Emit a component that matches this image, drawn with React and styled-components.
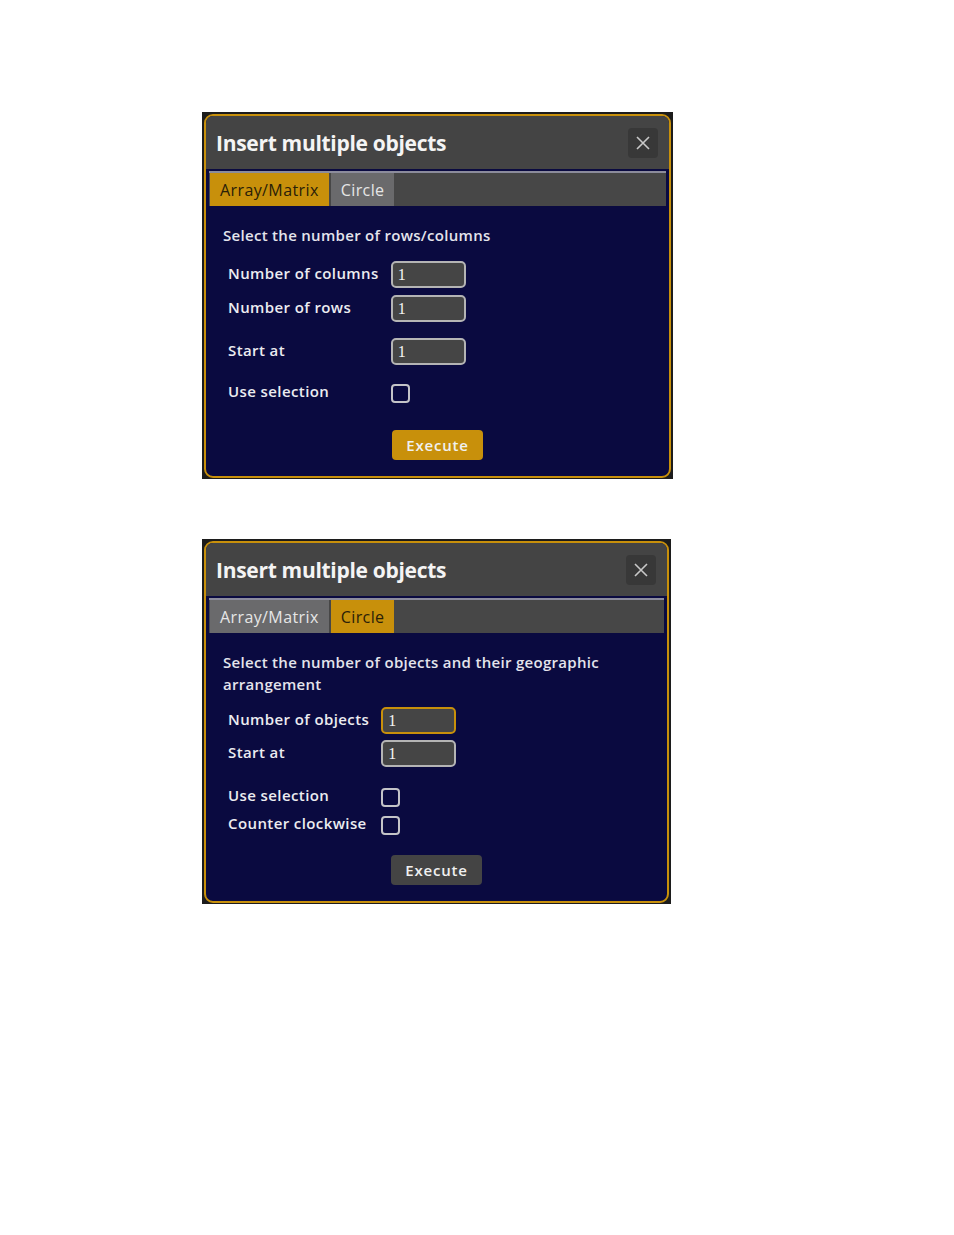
import React from "react";
import styled, { createGlobalStyle } from "styled-components";

const Global = createGlobalStyle`
  html, body {
    margin: 0;
    background: #ffffff;
  }
  body {
    font-family: "Open Sans", "Noto Sans", sans-serif;
  }
`;

const gold = "#c8900b";
const navy = "#0a0a40";

export default function App() {
  return (
    <Page>
      <Global />
      <Frame $width={471}>
        <Dialog>
          <TitleBar>
            <Title>Insert multiple objects</Title>
            <CloseButton aria-label="close">
              <svg width="16" height="16" viewBox="0 0 16 16">
                <path d="M2 2 L14 14 M14 2 L2 14" stroke="#c8c8c8" strokeWidth="1.6" />
              </svg>
            </CloseButton>
          </TitleBar>
          <Tabs>
            <Tab $active>Array/Matrix</Tab>
            <Tab>Circle</Tab>
          </Tabs>
          <Body>
            <Description>Select the number of rows/columns</Description>
            <Form $top={15}>
              <Label>Number of columns</Label>
              <Input>1</Input>
              <Label $mt={7}>Number of rows</Label>
              <Input $mt={7}>1</Input>
              <Label $mt={16}>Start at</Label>
              <Input $mt={16}>1</Input>
              <Label $mt={15}>Use selection</Label>
              <CheckCell $mt={15}>
                <Checkbox />
              </CheckCell>
            </Form>
            <Actions $top={24}>
              <ExecuteButton $primary>Execute</ExecuteButton>
            </Actions>
          </Body>
        </Dialog>
      </Frame>

      <Frame $width={469}>
        <Dialog>
          <TitleBar>
            <Title>Insert multiple objects</Title>
            <CloseButton aria-label="close">
              <svg width="16" height="16" viewBox="0 0 16 16">
                <path d="M2 2 L14 14 M14 2 L2 14" stroke="#c8c8c8" strokeWidth="1.6" />
              </svg>
            </CloseButton>
          </TitleBar>
          <Tabs>
            <Tab>Array/Matrix</Tab>
            <Tab $active>Circle</Tab>
          </Tabs>
          <Body>
            <Description>
              Select the number of objects and their geographic
              <br />
              arrangement
            </Description>
            <Form $top={12}>
              <Label>Number of objects</Label>
              <Input $focused>1</Input>
              <Label $mt={6}>Start at</Label>
              <Input $mt={6}>1</Input>
              <Label $mt={17}>Use selection</Label>
              <CheckCell $mt={17}>
                <Checkbox />
              </CheckCell>
              <Label $mt={2}>Counter clockwise</Label>
              <CheckCell $mt={2}>
                <Checkbox />
              </CheckCell>
            </Form>
            <Actions $top={17}>
              <ExecuteButton>Execute</ExecuteButton>
            </Actions>
          </Body>
        </Dialog>
      </Frame>
    </Page>
  );
}

const Page = styled.div`
  display: flex;
  flex-direction: column;
  align-items: flex-start;
  gap: 60px;
  padding: 112px 0 0 202px;
  min-height: 1235px;
  box-sizing: border-box;
`;

const Frame = styled.div`
  width: ${(p) => p.$width}px;
  box-sizing: border-box;
  background: #1c1c1c;
  padding: 2px 2px 1px 2px;
`;

const Dialog = styled.div`
  border: 2px solid ${gold};
  border-radius: 9px;
  background: ${navy};
  overflow: hidden;
`;

const TitleBar = styled.div`
  display: flex;
  align-items: center;
  justify-content: space-between;
  height: 53px;
  padding: 0 11px 0 10px;
  background: #444444;
  border-bottom: 2px solid ${navy};
`;

const Title = styled.h1`
  margin: 0;
  font-family: "Open Sans", "Noto Sans", sans-serif;
  font-weight: 700;
  font-size: 21px;
  letter-spacing: -0.3px;
  color: #f4f4f4;
`;

const CloseButton = styled.button`
  display: flex;
  align-items: center;
  justify-content: center;
  width: 30px;
  height: 30px;
  padding: 0;
  border: none;
  border-radius: 4px;
  background: #383838;
`;

const Tabs = styled.div`
  display: flex;
  gap: 2px;
  height: 33px;
  margin: 0 3px;
  padding-left: 1px;
  background: #474747;
  border-top: 2px solid #8c8c9c;
`;

const Tab = styled.div`
  display: flex;
  align-items: center;
  padding: 0 10px;
  font-size: 16px;
  letter-spacing: 0.4px;
  color: ${(p) => (p.$active ? "#2a2008" : "#e6e6e6")};
  background: ${(p) => (p.$active ? gold : "#6a6a6c")};
`;

const Body = styled.div`
  padding: 18px 17px 16px 17px;
  display: flex;
  flex-direction: column;
`;

const Description = styled.p`
  margin: 0;
  font-size: 15px;
  font-weight: 600;
  line-height: 22px;
  letter-spacing: 0.3px;
  color: #e4e4ec;
`;

const Form = styled.div`
  display: grid;
  grid-template-columns: max-content 75px;
  column-gap: 12px;
  align-items: center;
  margin-top: ${(p) => p.$top}px;
  padding-left: 5px;
`;

const Label = styled.div`
  margin-top: ${(p) => p.$mt || 0}px;
  font-size: 15px;
  font-weight: 600;
  letter-spacing: 0.4px;
  color: #ececf0;
  align-self: center;
  transform: translateY(-2px);
`;

const Input = styled.div`
  margin-top: ${(p) => p.$mt || 0}px;
  height: 27px;
  box-sizing: border-box;
  padding: 1px 5px 0;
  display: flex;
  align-items: center;
  border: 2px solid ${(p) => (p.$focused ? gold : "#b4b4b4")};
  border-radius: 5px;
  background: #454545;
  font-family: "Liberation Serif", serif;
  font-size: 16px;
  color: #f4f4f4;
`;

const CheckCell = styled.div`
  margin-top: ${(p) => p.$mt || 0}px;
  height: 26px;
  display: flex;
  align-items: center;
`;

const Checkbox = styled.div`
  width: 19px;
  height: 19px;
  box-sizing: border-box;
  border: 2px solid #c4c4c8;
  border-radius: 4px;
`;

const Actions = styled.div`
  display: flex;
  justify-content: center;
  margin-top: ${(p) => p.$top}px;
`;

const ExecuteButton = styled.button`
  width: 91px;
  height: 30px;
  border: none;
  border-radius: 4px;
  background: ${(p) => (p.$primary ? gold : "#444444")};
  font-family: "Open Sans", "Noto Sans", sans-serif;
  font-size: 15px;
  font-weight: 600;
  letter-spacing: 0.8px;
  color: #f0f0f0;
`;
